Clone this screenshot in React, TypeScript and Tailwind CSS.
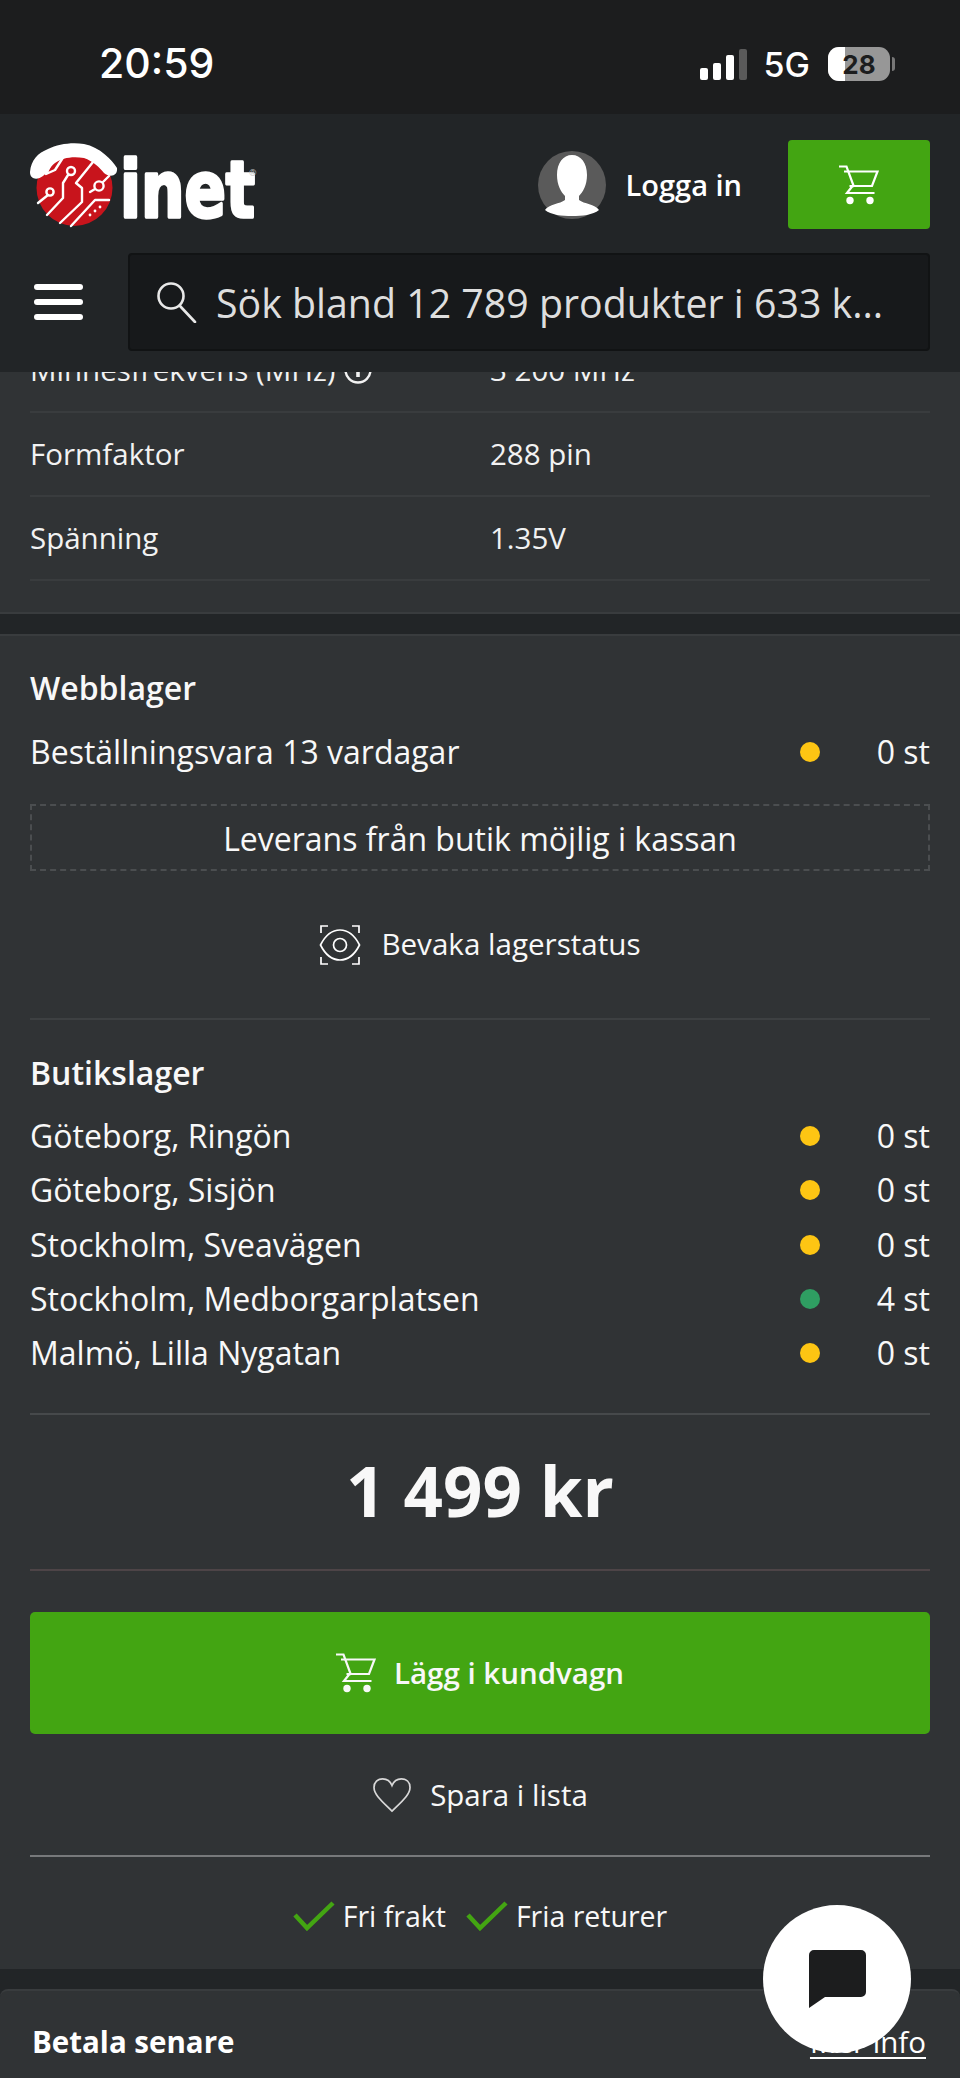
import React from "react";

const Cart = ({ className }: { className?: string }) => (
  <svg viewBox="0 0 40 40" className={className} fill="none" stroke="currentColor" strokeWidth="2.2">
    <path d="M0 1.5h7.5L15 22" />
    <path d="M5 6.5h33.5L33 21H10.5" />
    <path d="M13.5 21L8 28h27.5" />
    <circle cx="11" cy="35.5" r="3.7" fill="currentColor" stroke="none" />
    <circle cx="31" cy="35.5" r="3.7" fill="currentColor" stroke="none" />
  </svg>
);

const Dot = ({ green }: { green?: boolean }) => (
  <span className={`block h-[20px] w-[20px] rounded-full ${green ? "bg-[#2f9e62]" : "bg-[#fdc513]"}`} />
);

const Stock = ({ name, qty, green }: { name: string; qty: string; green?: boolean }) => (
  <div className="flex h-[54.25px] items-center">
    <span className="flex-1">{name}</span>
    <Dot green={green} />
    <span className="w-[110px] text-right">{qty}</span>
  </div>
);

const Logo = () => (
  <svg viewBox="27 140 232 92" className="h-[92px] w-[232px]">
    <circle cx="74.5" cy="188" r="38" fill="#c8141c" />
    <g fill="none" stroke="#fff" strokeWidth="2.4" strokeLinecap="round" strokeLinejoin="round">
      <path d="M38 203l10-8" />
      <circle cx="50" cy="192" r="3.6" fill="#c8141c" />
      <path d="M47 215l16-17v-15l5-8" />
      <circle cx="71" cy="171" r="4" fill="#c8141c" />
      <path d="M60 223l22-21v-14l-6-5 17-21" />
      <path d="M71 226l24-26h14" />
      <circle cx="99" cy="186" r="4.6" fill="#c8141c" />
      <path d="M103 182l6-6M90 192l5-3" />
      <path d="M46 174l6-12 12-6-9 14z" />
    </g>
    <g fill="#fff">
      <circle cx="90" cy="215" r="1.4" />
      <circle cx="95" cy="211" r="1.4" />
      <circle cx="100" cy="207" r="1.4" />
    </g>
    <path
      d="M30 172C31 160 38 153 48 149 58 144 72 142 84 144 100 147 112 160 117 168 118 176 110 178 104 173 100 168 93 161 84 158 72 156 62 158 55 163 50 167 47 173 43 176 38 180 30 180 30 172Z"
      fill="#fff"
    />
    <text
      x="120"
      y="217"
      fontFamily="'DejaVu Sans', sans-serif"
      fontWeight="700"
      fontSize="78"
      fill="#fff"
      stroke="#fff"
      strokeWidth="3.5"
      strokeLinejoin="round"
      textLength="135"
      lengthAdjust="spacingAndGlyphs"
    >
      inet
    </text>
    <text x="249" y="176" fontFamily="'Open Sans', sans-serif" fontSize="9" fill="#bdbdbd">®</text>
  </svg>
);

export default function App() {
  return (
    <div className="relative flex h-[2078px] w-[960px] flex-col overflow-hidden bg-[#222527] font-['Open_Sans',sans-serif] text-[30px] text-white">
      {/* status bar */}
      <div className="flex h-[114px] shrink-0 items-center bg-[#1c1d1e] pl-[99px] pr-[65px] pt-[14px] font-['Inter',sans-serif]">
        <span className="flex-1 text-[41px] font-medium">20:59</span>
        <div className="flex items-end gap-[5px]">
          <span className="h-[12px] w-[8px] rounded-[2px] bg-white" />
          <span className="h-[17px] w-[8px] rounded-[2px] bg-white" />
          <span className="h-[25px] w-[8px] rounded-[2px] bg-white" />
          <span className="h-[31px] w-[8px] rounded-[2px] bg-[#5a5a5a]" />
        </div>
        <span className="ml-[17px] text-[34px] font-medium">5G</span>
        <div className="relative ml-[18px] flex h-[34px] w-[62px] items-center justify-center overflow-hidden rounded-[11px] bg-[#979797] text-[26px] font-bold text-[#1c1d1e]">
          <span className="absolute left-0 top-0 h-full w-[17px] bg-white" />
          <span className="relative">28</span>
        </div>
        <span className="ml-[2px] h-[14px] w-[3px] rounded-r-full bg-[#777]" />
      </div>

      {/* header */}
      <div className="z-10 h-[258px] shrink-0 bg-[#222527] px-[30px]">
        <div className="flex h-[139px] items-start pt-[26px]">
          <div className="-ml-[3px] flex-1">
            <Logo />
          </div>
          <div className="flex h-[89px] items-center pr-[46px]">
            <svg viewBox="0 0 68 68" className="h-[68px] w-[68px]">
              <circle cx="34" cy="34" r="34" fill="#5a5a5a" />
              <path
                d="M34 4c-9 0-15 8-15 20 0 10 4 17 8 21v4c-5 4-16 4-20 10 6 5 17 6 27 6s21-1 27-6c-4-6-15-6-20-10v-4c4-4 8-11 8-21 0-12-6-20-15-20z"
                fill="#fff"
              />
            </svg>
            <span className="ml-[20px] text-[29px] font-semibold">Logga in</span>
          </div>
          <div className="flex h-[89px] w-[142px] items-center justify-center rounded-[4px] bg-[#43a512]">
            <Cart className="h-[40px] w-[40px]" />
          </div>
        </div>
        <div className="flex items-center">
          <div className="flex w-[98px] shrink-0 flex-col gap-[9px] pl-[4px]">
            <span className="h-[6px] w-[49px] rounded-full bg-white" />
            <span className="h-[6px] w-[49px] rounded-full bg-white" />
            <span className="h-[6px] w-[49px] rounded-full bg-white" />
          </div>
          <div className="flex h-[98px] flex-1 items-center rounded-[4px] border-2 border-[#111314] bg-[#17191b] pl-[26px]">
            <svg viewBox="0 0 42 42" className="h-[42px] w-[42px]" fill="none" stroke="#e8e8e8" strokeWidth="2.6" strokeLinecap="round">
              <circle cx="15" cy="15" r="12.5" />
              <path d="M24 25l15 16" />
            </svg>
            <span className="ml-[18px] pt-[2px] text-[39.3px] text-[#dedede]">Sök bland 12 789 produkter i 633 k...</span>
          </div>
        </div>
      </div>

      {/* scrolled content */}
      <div className="min-h-0 flex-1 overflow-hidden">
        <div className="-mt-[43px]">
          <section className="border-b-2 border-[#393c3e] bg-[#303335] px-[30px] pb-[31px] text-[29.5px] text-[#f2f2f2]">
            <div className="flex h-[84px] items-center border-b-2 border-[#393c3e]">
              <span className="flex w-[460px] items-center gap-[8px]">
                Minnesfrekvens (MHz)
                <svg viewBox="0 0 30 30" className="h-[30px] w-[30px]" fill="none" stroke="#f2f2f2" strokeWidth="2.4">
                  <circle cx="15" cy="15" r="12.5" />
                  <path d="M15 12v10M15 7v3" strokeWidth="3.6" />
                </svg>
              </span>
              <span>3 200 MHz</span>
            </div>
            <div className="flex h-[84px] items-center border-b-2 border-[#393c3e]">
              <span className="w-[460px]">Formfaktor</span>
              <span>288 pin</span>
            </div>
            <div className="flex h-[84px] items-center border-b-2 border-[#393c3e]">
              <span className="w-[460px]">Spänning</span>
              <span>1.35V</span>
            </div>
          </section>

          <section className="mt-[20px] h-[1335px] border-t-2 border-[#393c3e] bg-[#303335] px-[30px] text-[#f8f8f8]">
            <h3 className="pt-[30px] text-[32px] font-semibold leading-[44px]">Webblager</h3>
            <div className="mt-[20px] flex h-[44px] items-center text-[32px]">
              <span className="flex-1">Beställningsvara 13 vardagar</span>
              <Dot />
              <span className="w-[110px] text-right">0 st</span>
            </div>
            <div className="mt-[30px] flex h-[67px] items-center justify-center border-2 border-dashed border-[#4b4e50] pt-[2px] text-[32px]">
              Leverans från butik möjlig i kassan
            </div>
            <div className="flex h-[149px] items-center justify-center border-b-2 border-[#3d4042] text-[29.6px]">
              <svg viewBox="0 0 42 42" className="mr-[20px] h-[42px] w-[42px]" fill="none" stroke="#fff" strokeWidth="1.7">
                <path d="M9 2H2v7M33 2h7v7M9 40H2v-7M33 40h7v-7" />
                <path d="M1.5 21C6 12 13 6 21 6s15 6 19.5 15C36 30 29 36 21 36S6 30 1.5 21z" />
                <circle cx="21" cy="21" r="6.5" />
              </svg>
              Bevaka lagerstatus
            </div>
            <h3 className="pt-[31px] text-[32px] font-semibold leading-[44px]">Butikslager</h3>
            <div className="mt-[14px] border-b-2 border-[#46494b] pb-[33px] text-[32px]">
              <Stock name="Göteborg, Ringön" qty="0 st" />
              <Stock name="Göteborg, Sisjön" qty="0 st" />
              <Stock name="Stockholm, Sveavägen" qty="0 st" />
              <Stock name="Stockholm, Medborgarplatsen" qty="4 st" green />
              <Stock name="Malmö, Lilla Nygatan" qty="0 st" />
            </div>
            <div className="flex h-[156px] items-center justify-center border-b-2 border-[#4d4447] pb-[4px] text-[69px] font-bold">1 499 kr</div>
            <div className="mt-[41px] flex h-[122px] items-center justify-center rounded-[5px] bg-[#43a512] text-[29.5px] font-semibold">
              <Cart className="mr-[18px] h-[40px] w-[40px]" />
              Lägg i kundvagn
            </div>
            <div className="flex h-[123px] items-center justify-center border-b-2 border-[#77797b] text-[29.5px]">
              <svg viewBox="0 0 42 38" className="mr-[18px] h-[36px] w-[40px]" fill="none" stroke="#d8d8d8" strokeWidth="1.8">
                <path d="M21 36C12 27 2 19 2 11 2 5 6 2 11 2c4 0 8 2 10 7 2-5 6-7 10-7 5 0 9 3 9 9 0 8-10 16-19 25z" />
              </svg>
              Spara i lista
            </div>
            <div className="flex h-[120px] items-center justify-center pb-[2px] text-[28.5px]">
              <svg viewBox="0 0 42 30" className="mr-[8px] h-[30px] w-[42px]" fill="none" stroke="#43a512" strokeWidth="4.5">
                <path d="M2 14l12 13L40 2" />
              </svg>
              <span className="font-medium">Fri frakt</span>
              <svg viewBox="0 0 42 30" className="ml-[20px] mr-[8px] h-[30px] w-[42px]" fill="none" stroke="#43a512" strokeWidth="4.5">
                <path d="M2 14l12 13L40 2" />
              </svg>
              <span className="font-medium">Fria returer</span>
            </div>
          </section>

          <section className="mt-[20px] flex h-[120px] items-start justify-between rounded-t-[8px] border-t-2 border-[#393c3e] bg-[#303335] pl-[32px] pr-[34px] pt-[29px]">
            <span className="text-[29.5px] font-bold leading-[44px]">Betala senare</span>
            <span className="text-[29.5px] leading-[44px] underline underline-offset-[4px]">Mer info</span>
          </section>
        </div>
      </div>

      {/* chat bubble */}
      <div className="absolute left-[763px] top-[1905px] z-20 flex h-[148px] w-[148px] items-center justify-center rounded-full bg-white">
        <svg viewBox="0 0 57 58" className="h-[58px] w-[57px]" fill="#1c1d1e">
          <path d="M5 0h47a5 5 0 0 1 5 5v37a5 5 0 0 1-5 5H16L0 58V5a5 5 0 0 1 5-5z" />
        </svg>
      </div>
    </div>
  );
}
